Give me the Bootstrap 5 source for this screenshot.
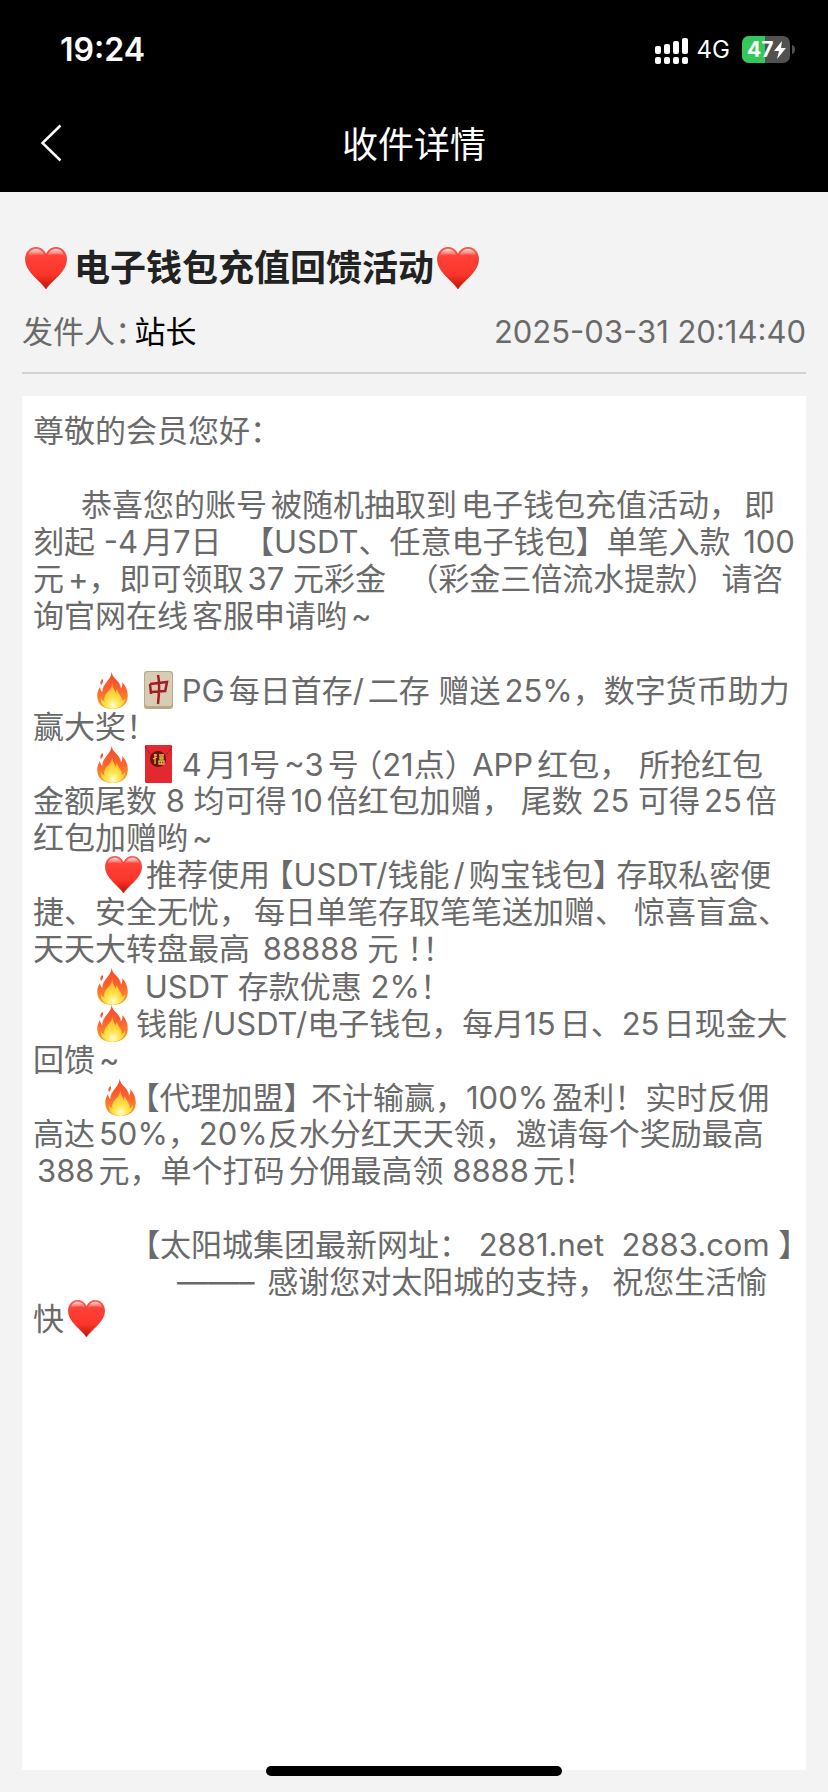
<!DOCTYPE html>
<html lang="zh-CN">
<head>
<meta charset="utf-8">
<meta name="viewport" content="width=device-width, initial-scale=1">
<title>收件详情</title>
<link href="https://cdn.jsdelivr.net/npm/bootstrap@5.3.0/dist/css/bootstrap.min.css" rel="stylesheet">
<style>
body{background:#f3f3f3;font-family:Inter,"Noto Sans CJK SC",sans-serif;color:#6a6a6a}
.status-bar{height:98px;padding:2px 32px 0 60px}
.clock{font-size:32px;font-weight:600;line-height:40px}
.net{font-size:24px;line-height:32px}
.nav-bar{display:grid;grid-template-columns:1fr auto 1fr;height:94px;padding:0 36px}
.nav-bar h1{font-size:36px;line-height:40px;font-weight:400}
.back{width:30px;height:44px}
.mail{padding:54px 22px 22px}
.subject{font-size:36px;line-height:44px;font-weight:700;color:#222}
.meta{font-size:31px;line-height:40px;margin-top:22px;padding-bottom:20px;border-bottom:2px solid #d2d2d2}
.letter{font-size:31px;line-height:37px;margin-top:22px;padding:16px 11px}
.letter p{height:37px;white-space:pre}
.half{font-feature-settings:"halt"}
.heart,.fire,.tile{display:inline-block;vertical-align:-7px}
.heart{width:37px;height:37px}
.subject .heart{width:42px;height:42px;margin:0 3px}
.fire{width:31px;height:38px}
.tile{width:29px;height:38px}
.home-bar{width:296px;height:10px;bottom:16px}
</style>
<script src="https://cdn.jsdelivr.net/npm/bootstrap@5.3.0/dist/js/bootstrap.bundle.min.js"></script>
</head>
<body>
<svg width="0" height="0" class="position-absolute" aria-hidden="true">
<defs>
<linearGradient id="hg" x1="0" y1="0" x2="0" y2="1"><stop offset="0" stop-color="#ff6a60"/><stop offset=".2" stop-color="#ff4238"/><stop offset=".65" stop-color="#fb3529"/><stop offset="1" stop-color="#c01208"/></linearGradient>
<linearGradient id="hs" x1="0" y1="0" x2="0" y2="1"><stop offset="0" stop-color="#fff" stop-opacity=".75"/><stop offset="1" stop-color="#fff" stop-opacity="0"/></linearGradient>
<linearGradient id="fg" x1="0" y1="0" x2="0" y2="1"><stop offset="0" stop-color="#f6452c"/><stop offset=".5" stop-color="#fb6430"/><stop offset="1" stop-color="#ffa21f"/></linearGradient>
<radialGradient id="fi" cx=".5" cy=".85" r=".75"><stop offset="0" stop-color="#fffbd0"/><stop offset=".35" stop-color="#ffe64d"/><stop offset="1" stop-color="#ffb226"/></radialGradient>
<symbol id="heart" viewBox="0 0 42 42"><path d="M21 42C16 34 .5 25 .5 12.500C.5 5 5 .5 11 .5c5 0 8.500 3 10 7.500C22.500 3.500 26 .5 31 .5c6 0 10.500 4.500 10.500 12C41.500 25 26 34 21 42z" fill="url(#hg)" stroke="#dc3024" stroke-width=".7"/><path d="M3 9C4 4.500 7 2 11 2c4 0 7 2.500 8.500 7-5-2-11-2-16.500 0zM22.500 9C24 4.500 27 2 31 2c4 0 7 2.500 8 7-5-2-11.500-2-16.500 0z" fill="url(#hs)"/></symbol>
<symbol id="fire" viewBox="0 0 31 38"><path d="M14.500 0c.3 6 5 8 7.500 12 1.200 2 1.900 3.500 1.900 5.500 1.500-1.500 1.700-4 1.300-6.500 3.900 4 6 9.500 5.500 15C30 34 24 38 15.500 38S.8 34 .3 26C0 21 1.500 18.500 3 16c.3 2.500 1 4 2.300 5C5 12 15 9 14.500 0zM5.500 8c1.200 2 .5 4-1.500 6-1.300-2-.5-4.500 1.500-6z" fill="url(#fg)"/><path d="M15 12c.5 7-6 8.500-7.500 14-.6 2-.6 3 .2 4.500-2-.7-3.200-2-3.900-4C3 34 9 38 15.500 38S28 34 28.300 26.500c-.9 2-2 3-3.800 3.700C26 26 20.500 22.500 20 18c-.8 1.300-1.300 2.500-1.200 3.900C17.500 19 16 17 15 12z" fill="url(#fi)"/></symbol>
</defs>
</svg>
<div class="min-vh-100 d-flex flex-column position-relative">
<header class="bg-black text-white">
<div class="status-bar d-flex align-items-center justify-content-between">
<span class="clock">19:24</span>
<div class="d-flex align-items-center">
<svg width="34" height="27" viewBox="0 0 34 27" fill="#fff" aria-hidden="true"><rect x="0" y="9" width="6" height="8" rx="2"/><rect x="9" y="7" width="6" height="10" rx="2"/><rect x="18" y="4" width="6" height="13" rx="2"/><rect x="27" y="1" width="6" height="16" rx="2"/><rect x="0" y="20" width="6" height="7" rx="2"/><rect x="9" y="20" width="6" height="7" rx="2"/><rect x="18" y="20" width="6" height="7" rx="2"/><rect x="27" y="20" width="6" height="7" rx="2"/></svg>
<span class="net ms-2 me-2 pe-1">4G</span>
<svg width="54" height="28" viewBox="0 0 54 28" role="img" aria-label="47%"><defs><clipPath id="bat"><rect width="48" height="27" rx="7"/></clipPath></defs><g clip-path="url(#bat)"><rect width="48" height="27" fill="#515151"/><rect width="23" height="27" fill="#34c759"/></g><path d="M50 9c2 .5 3 2 3 4.500S52 17.500 50 18z" fill="#515151"/><text x="5" y="21" font-size="21" font-weight="700" fill="#fff" font-family="Inter,sans-serif">47</text><path d="M40 5L32 15h5l-2 8 9-11h-5z" fill="#fff"/></svg>
</div>
</div>
<nav class="nav-bar align-items-center">
<button type="button" class="back btn p-0 pb-1 border-0 d-flex align-items-center" aria-label="返回"><svg width="30" height="38" viewBox="0 0 30 38" fill="none" stroke="#fff" stroke-width="2.500"><path d="M24.500 1.500L6.500 19l18 17.500"/></svg></button>
<h1 class="m-0">收件详情</h1>
</nav>
</header>
<main class="mail flex-grow-1 d-flex flex-column">
<h2 class="subject m-0 d-flex align-items-center"><svg class="heart"><use href="#heart"/></svg><span class="ms-1">电子钱包充值回馈活动</span><svg class="heart"><use href="#heart"/></svg></h2>
<div class="meta d-flex justify-content-between"><span class="half">发件人：<span class="text-black ms-1">站长</span></span><time datetime="2025-03-31T20:14:40">2025-03-31 20:14:40</time></div>
<article class="letter bg-white flex-grow-1">
<p class="m-0">尊敬的会员您好：</p>
<p class="m-0"></p>
<p class="m-0 ps-5">恭喜您的账号<span class="ms-1">被随机抽取到</span><span class="ms-1">电子钱包充值活动，</span><span class="ms-1">即</span></p>
<p class="m-0">刻起 -4<span class="ms-1">月7日</span>  <span class="ms-1">【USDT、任意电子钱包】</span>单笔入款<span class="ms-1"> 100</span></p>
<p class="m-0">元<span class="ms-1">+，</span>即可领取<span class="ms-1">37</span> 元彩金  <span class="ms-1">（彩金三倍流水提款）</span><span class="ms-1">请咨</span></p>
<p class="m-0">询官网在线<span class="ms-1">客服申请哟</span><span class="ms-1">~</span></p>
<p class="m-0"></p>
<p class="m-0 ps-5"><svg class="fire ms-3"><use href="#fire"/></svg><svg class="tile ms-3" viewBox="0 0 29 38"><rect width="29" height="38" rx="3" fill="#b8a98c"/><rect x="1" y="1" width="27" height="34" rx="3" fill="#d9ccb4"/><path d="M6 13l1 10M6 13l17-2-2 10M7 21l14-1M14 4c2 8 1 20 0 29" fill="none" stroke="#a51b25" stroke-width="2.500"/></svg> PG<span class="ms-1">每日首存</span>/<span class="ms-1">二存</span> 赠送<span class="ms-1">25%，</span>数字货币助力</p>
<p class="m-0">赢大奖！</p>
<p class="m-0 ps-5"><svg class="fire ms-3"><use href="#fire"/></svg><svg class="tile ms-3" viewBox="0 0 29 38"><rect x="1" width="27" height="38" rx="1" fill="#e3292f"/><path d="M1 1q4 10 13.500 12Q24 11 28 1" fill="none" stroke="#b3161d"/><circle cx="14" cy="14" r="8" fill="#691411"/><path d="M10 10h3M11 9v10M9 14l4-2M15 10h5M16 12h3v2h-3zM15 16h5v3h-5zM17.500 16v3" fill="none" stroke="#e8b84d" stroke-width="1.300"/></svg> 4<span class="ms-1">月1号</span><span class="ms-1">~3</span><span class="ms-1">号</span><span class="half mx-2">（21点）</span><span class="ms-1">APP</span><span class="ms-1">红包，</span> 所抢红包</p>
<p class="m-0">金额尾数 8 均可得<span class="ms-1">10</span><span class="ms-1">倍红包加赠，</span><span class="ms-2">尾数</span> 25 可得<span class="ms-1">25</span><span class="ms-1">倍</span></p>
<p class="m-0">红包加赠哟<span class="ms-1">~</span></p>
<p class="m-0 ps-5 half"><svg class="heart ms-4"><use href="#heart"/></svg><span class="ms-1">推荐使用</span><span class="ms-2">【USDT/</span>钱能<span class="ms-1">/</span><span class="ms-1">购宝钱包】</span><span class="ms-2">存取私密便</span></p>
<p class="m-0">捷、安全无忧，<span class="ms-1">每日单笔存取</span>笔笔送加赠、<span class="ms-2">惊喜盲盒、</span></p>
<p class="m-0 half">天天大转盘最高<span class="ms-1"> 88888</span> 元 ！！</p>
<p class="m-0 ps-5"><svg class="fire ms-3"><use href="#fire"/></svg><span class="ms-2"> USDT</span> 存款优惠 2%！</p>
<p class="m-0 ps-5"><svg class="fire ms-3"><use href="#fire"/></svg><span class="ms-2">钱能</span><span class="ms-1">/USDT/</span>电子钱包，每月15<span class="ms-1">日、</span>25<span class="ms-1">日现金大</span></p>
<p class="m-0">回馈<span class="ms-1">~</span></p>
<p class="m-0 ps-5"><svg class="fire ms-4"><use href="#fire"/></svg><span class="half mx-2">【代理加盟】</span><span class="ms-1">不计输赢，</span>100%<span class="ms-1">盈利！</span>实时反佣</p>
<p class="m-0">高达<span class="ms-1">50%，</span>20%反水分红天天领，邀请每个奖励最高</p>
<p class="m-0"><span class="ms-1">388</span><span class="ms-1">元，</span>单个打码<span class="ms-1">分佣最高领</span> 8888<span class="ms-1">元！</span></p>
<p class="m-0"></p>
<p class="m-0 ps-5"><span class="ms-5">【太阳城集团最新网址：</span> 2881.net  2883.com 】</p>
<p class="m-0 ps-5"><span class="ms-5"></span><span class="ms-5">——–</span><span class="ms-1"> 感谢您对太阳城的支持，</span><span class="ms-1">祝您生活愉</span></p>
<p class="m-0">快<svg class="heart ms-1"><use href="#heart"/></svg></p>
</article>
</main>
<div class="home-bar bg-black rounded-pill position-absolute start-50 translate-middle-x"></div>
</div>
</body>
</html>
